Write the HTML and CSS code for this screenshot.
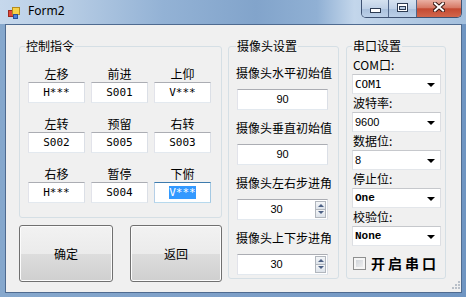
FILE: index.html
```html
<!DOCTYPE html>
<html>
<head>
    <meta charset="utf-8">
    <link rel="stylesheet" href="styles.css">
</head>
<body>
<div class="window">
    <div class="titlebar">
        <svg class="app-icon" width="14" height="14" viewBox="0 0 14 14">
            <rect x="1.5" y="4.5" width="5" height="6" fill="#e2483a" stroke="#9a2a20"/>
            <rect x="5.5" y="1.5" width="7" height="7" fill="#f6d24a" stroke="#b58b1c"/>
            <rect x="6.5" y="8.5" width="4" height="4" fill="#4a7fd6" stroke="#27509a"/>
        </svg>
        <span class="title">Form2</span>
        <div class="caption">
            <div class="cb cb-min">
                <svg width="11" height="5" viewBox="0 0 11 5"><rect x="0.5" y="0.5" width="10" height="4" fill="#fff" stroke="#2c3b52"/></svg>
            </div>
            <div class="cb cb-max">
                <svg width="11" height="9" viewBox="0 0 11 9"><rect x="0.5" y="0.5" width="10" height="8" fill="#fff" stroke="#2c3b52"/><rect x="2.5" y="3.5" width="6" height="3" fill="#b9cce3" stroke="#2c3b52"/></svg>
            </div>
            <div class="cb cb-close">
                <svg width="12" height="10" viewBox="0 0 12 10"><path d="M2 1.5 L10 8.5 M10 1.5 L2 8.5" stroke="#3a1a14" stroke-width="4" stroke-linecap="square"/><path d="M2 1.5 L10 8.5 M10 1.5 L2 8.5" stroke="#fff" stroke-width="2" stroke-linecap="square"/></svg>
            </div>
        </div>
    </div>

    <div class="client">
        <div class="col-left">
            <fieldset class="group g-ctrl">
                <legend>控制指令</legend>
                <div class="cmd-grid">
                    <div class="cmd"><label>左移</label><div class="tb">H***</div></div>
                    <div class="cmd"><label>前进</label><div class="tb">S001</div></div>
                    <div class="cmd"><label>上仰</label><div class="tb">V***</div></div>
                    <div class="cmd"><label>左转</label><div class="tb">S002</div></div>
                    <div class="cmd"><label>预留</label><div class="tb">S005</div></div>
                    <div class="cmd"><label>右转</label><div class="tb">S003</div></div>
                    <div class="cmd"><label>右移</label><div class="tb">H***</div></div>
                    <div class="cmd"><label>暂停</label><div class="tb">S004</div></div>
                    <div class="cmd"><label>下俯</label><div class="tb tb-focus"><span class="sel">V***</span></div></div>
                </div>
            </fieldset>
            <div class="btn-row">
                <button class="btn btn-ok">确定</button>
                <button class="btn btn-back">返回</button>
            </div>
        </div>

        <fieldset class="group g-cam">
            <legend>摄像头设置</legend>
            <div class="cam-body">
                <label>摄像头水平初始值</label>
                <div class="num">90</div>
                <label>摄像头垂直初始值</label>
                <div class="num">90</div>
                <label>摄像头左右步进角</label>
                <div class="num nud">
                    <span class="nud-val">30</span>
                    <span class="spin"><span class="spin-up"></span><span class="spin-down"></span></span>
                </div>
                <label>摄像头上下步进角</label>
                <div class="num nud">
                    <span class="nud-val">30</span>
                    <span class="spin"><span class="spin-up"></span><span class="spin-down"></span></span>
                </div>
            </div>
        </fieldset>

        <fieldset class="group g-com">
            <legend>串口设置</legend>
            <div class="com-body">
                <label>COM口:</label>
                <div class="combo"><span class="mono">COM1</span><span class="arrow"></span></div>
                <label>波特率:</label>
                <div class="combo"><span class="sans">9600</span><span class="arrow"></span></div>
                <label>数据位:</label>
                <div class="combo"><span class="sans">8</span><span class="arrow"></span></div>
                <label>停止位:</label>
                <div class="combo"><span class="fixed">One</span><span class="arrow"></span></div>
                <label>校验位:</label>
                <div class="combo"><span class="fixed">None</span><span class="arrow"></span></div>
                <div class="check-row">
                    <span class="checkbox"></span>
                    <span class="check-label">开启串口</span>
                </div>
            </div>
        </fieldset>

        <svg class="grip" width="10" height="10" viewBox="0 0 10 10">
            <rect x="8" y="0" width="2" height="2" fill="#b9c0c9"/>
            <rect x="5" y="3" width="2" height="2" fill="#b9c0c9"/>
            <rect x="8" y="3" width="2" height="2" fill="#b9c0c9"/>
            <rect x="2" y="6" width="2" height="2" fill="#b9c0c9"/>
            <rect x="5" y="6" width="2" height="2" fill="#b9c0c9"/>
            <rect x="8" y="6" width="2" height="2" fill="#b9c0c9"/>
        </svg>
    </div>
</div>
</body>
</html>
```

FILE: styles.css
```css
* {
    box-sizing: border-box;
}
body {
    margin: 0;
    font-family: "Noto Sans CJK SC", "Noto Sans", sans-serif;
    font-size: 12px;
    color: #000;
}
.window {
    width: 466px;
    height: 297px;
    display: flex;
    flex-direction: column;
    background: linear-gradient(to right, #86a8cd, #7d9fc8 50%, #6f95c2);
}

/* title bar */
.titlebar {
    height: 24px;
    display: flex;
    align-items: flex-start;
    background: linear-gradient(to right, #c6d8ec 0%, #b6cce4 15%, #93b2d5 35%, #82a4cb 55%, #90b0d4 68%, #c3d6eb 76%, #b3cae3 88%, #a3bfdd 100%);
}
.app-icon {
    margin: 6px 7px 0 7px;
}
.title {
    font-family: "Noto Sans", sans-serif;
    font-size: 12px;
    line-height: 16px;
    margin-top: 3px;
}
.caption {
    margin-left: auto;
    margin-right: 4px;
    display: flex;
    height: 18px;
    border: 1px solid #3e5272;
    border-top: 0;
    border-radius: 0 0 5px 5px;
    overflow: hidden;
}
.cb {
    display: flex;
    justify-content: center;
    align-items: flex-start;
}
.cb svg {
    display: block;
}
.cb-min {
    width: 27px;
    border-right: 1px solid #51678a;
    background: linear-gradient(#d5e2f0, #bfd1e7 50%, #a9c0dc 51%, #bcd0e8);
}
.cb-min svg {
    margin-top: 8px;
}
.cb-max {
    width: 28px;
    border-right: 1px solid #51678a;
    background: linear-gradient(#d5e2f0, #bfd1e7 50%, #a9c0dc 51%, #bcd0e8);
}
.cb-max svg {
    margin-top: 3px;
}
.cb-close {
    width: 44px;
    background: linear-gradient(#eab0a3, #d77a66 45%, #c44a32 52%, #d2664c);
}
.cb-close svg {
    margin-top: 2px;
}

/* client area */
.client {
    flex: 1;
    margin: 0 4px 4px 5px;
    border: 1px solid #4f6b90;
    background: #f0f0f0;
    display: flex;
    align-items: flex-start;
    padding: 14px 0 0 13px;
    position: relative;
}
.group {
    margin: 0;
    padding: 0;
    min-width: 0;
    border: 1px solid #d5dfe5;
    border-radius: 3px;
}
.group legend {
    padding: 0 1px;
    line-height: 14px;
}
.col-left {
    width: 203px;
    margin-right: 6px;
}
.g-ctrl legend {
    margin-left: 5px;
}
.cmd-grid {
    display: grid;
    grid-template-columns: repeat(3, 57px);
    column-gap: 6px;
    row-gap: 14px;
    padding: 14px 10px 14px 8px;
}
.cmd label {
    display: block;
    text-align: center;
    line-height: 14px;
    margin-bottom: 1px;
}
.tb {
    height: 21px;
    background: #fff;
    border: 1px solid;
    border-color: #abadb3 #dbdfe6 #e3e9ef #e2e3ea;
    font-family: "DejaVu Sans Mono", monospace;
    font-size: 11px;
    line-height: 19px;
    text-align: center;
}
.tb-focus {
    border-color: #3d7bad #a4c9e3 #b7d9ed #b5cfe7;
}
.sel {
    background: #3399ff;
    color: #fff;
}

.btn-row {
    display: flex;
    justify-content: space-between;
    margin-top: 7px;
}
.btn {
    height: 57px;
    padding: 0;
    border: 1px solid #707070;
    border-radius: 3px;
    background: linear-gradient(#f2f2f2, #ebebeb 50%, #dddddd 50%, #cfcfcf);
    box-shadow: inset 0 0 0 1px #fcfcfc;
    font: inherit;
    color: #000;
}
.btn-ok {
    width: 94px;
}
.btn-back {
    width: 92px;
}

/* camera group */
.g-cam {
    width: 111px;
    height: 240px;
    margin-right: 7px;
}
.g-cam legend {
    margin-left: 7px;
}
.cam-body {
    padding: 13px 0 0 8px;
}
.cam-body label {
    display: block;
    line-height: 14px;
    margin: 0 0 9px -1px;
    white-space: nowrap;
}
.num {
    width: 91px;
    height: 21px;
    margin-bottom: 11px;
    background: #fff;
    border: 1px solid;
    border-color: #abadb3 #dbdfe6 #e3e9ef #e2e3ea;
    font-family: "Liberation Sans", sans-serif;
    font-size: 11px;
    line-height: 19px;
    text-align: center;
}
.nud {
    display: flex;
    padding: 1px 1px 1px 0;
}
.nud-val {
    flex: 1;
    line-height: 17px;
}
.spin {
    width: 11px;
    display: flex;
    flex-direction: column;
}
.spin-up,
.spin-down {
    flex: 1;
    position: relative;
    border: 1px solid #b1b6bd;
    background: linear-gradient(#f4f6f8, #dde3ea);
}
.spin-down {
    border-top: 0;
}
.spin-up::after,
.spin-down::after {
    content: "";
    position: absolute;
    left: 2px;
    top: 2px;
    border-left: 3px solid transparent;
    border-right: 3px solid transparent;
}
.spin-up::after {
    border-bottom: 3px solid #4d6185;
}
.spin-down::after {
    top: 1px;
    border-top: 3px solid #4d6185;
}

/* serial group */
.g-com {
    width: 100px;
    height: 240px;
}
.g-com legend {
    margin-left: 5px;
}
.com-body {
    padding: 5px 0 0 5px;
}
.com-body label {
    display: block;
    line-height: 14px;
    margin: 0 0 2px 1px;
}
.combo {
    width: 89px;
    height: 20px;
    margin-bottom: 2px;
    display: flex;
    align-items: center;
    justify-content: space-between;
    padding: 0 5px 0 2px;
    background: #fff;
    border: 1px solid;
    border-color: #c6c8cc #dcdee2 #e3e6ea #dcdee2;
}
.mono {
    font-family: "DejaVu Sans Mono", monospace;
    font-size: 11px;
}
.sans {
    font-family: "Liberation Sans", sans-serif;
    font-size: 11px;
}
.fixed {
    font-family: "Liberation Mono", monospace;
    font-size: 11px;
    font-weight: bold;
}
.arrow {
    margin-top: 2px;
    border-left: 4px solid transparent;
    border-right: 4px solid transparent;
    border-top: 4px solid #000;
}
.check-row {
    display: flex;
    align-items: center;
    margin-top: 9px;
    padding-left: 1px;
}
.checkbox {
    width: 13px;
    height: 13px;
    border: 1px solid #8e8f8f;
    background: linear-gradient(135deg, #c9ced4, #f4f4f4);
    box-shadow: inset 0 0 0 2px #f5f5f5;
}
.check-label {
    margin-left: 5px;
    font-size: 14px;
    font-weight: bold;
    letter-spacing: 3px;
    line-height: 16px;
}
.grip {
    position: absolute;
    right: 1px;
    bottom: 1px;
}
```
